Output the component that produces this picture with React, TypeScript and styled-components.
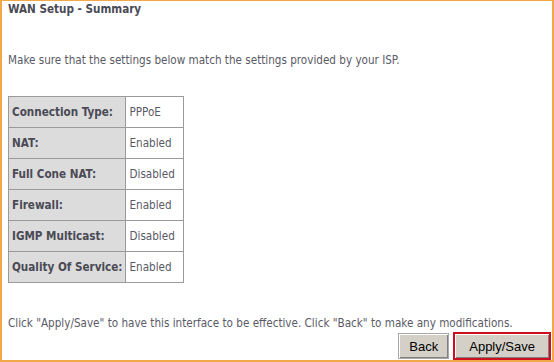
import React from "react";
import styled, { createGlobalStyle } from "styled-components";

const GlobalStyle = createGlobalStyle`
  html, body {
    margin: 0;
    padding: 0;
    background: #ffffff;
  }
  body {
    font-family: "DejaVu Sans Condensed", "Noto Sans", sans-serif;
  }
`;

const rows = [
  { label: "Connection Type:", value: "PPPoE" },
  { label: "NAT:", value: "Enabled" },
  { label: "Full Cone NAT:", value: "Disabled" },
  { label: "Firewall:", value: "Enabled" },
  { label: "IGMP Multicast:", value: "Disabled" },
  { label: "Quality Of Service:", value: "Enabled" },
];

export default function App() {
  return (
    <>
      <GlobalStyle />
      <Frame>
        <Title>WAN Setup - Summary</Title>
        <Intro>
          Make sure that the settings below match the settings provided by your ISP.
        </Intro>
        <SummaryTable>
          <tbody>
            {rows.map((row) => (
              <tr key={row.label}>
                <LabelCell>{row.label}</LabelCell>
                <ValueCell>{row.value}</ValueCell>
              </tr>
            ))}
          </tbody>
        </SummaryTable>
        <Note>
          Click "Apply/Save" to have this interface to be effective. Click "Back" to make any
          modifications.
        </Note>
        <Actions>
          <Button>Back</Button>
          <Button $primary>Apply/Save</Button>
        </Actions>
      </Frame>
    </>
  );
}

const Frame = styled.div`
  width: 554px;
  height: 362px;
  box-sizing: border-box;
  border-left: 2px solid #f0a848;
  border-top: 1px solid #f0a848;
  border-right: 2px solid #f0a848;
  border-bottom: 2px solid #f0a848;
  padding: 1px 1px 0 6px;
  display: flex;
  flex-direction: column;
  color: #555560;
`;

const Title = styled.div`
  font-weight: bold;
  font-size: 11.6px;
  color: #4a4a55;
  height: 16px;
  line-height: 14px;
`;

const Intro = styled.div`
  font-size: 11.6px;
  margin-top: 35px;
  line-height: 14px;
  color: #5a5a66;
`;

const SummaryTable = styled.table`
  margin-top: 29px;
  border-collapse: collapse;
  border: 1px solid #e6e6e6;
  font-size: 11.6px;
  width: 176px;
`;

const LabelCell = styled.td`
  background: #dcdcdc;
  font-weight: bold;
  color: #4a4a55;
  height: 30px;
  padding: 0 3px;
  border: 1px solid #9a9a9a;
  white-space: nowrap;
  width: 110px;
`;

const ValueCell = styled.td`
  background: #ffffff;
  color: #5a5a66;
  height: 30px;
  padding: 0 3px;
  border: 1px solid #9a9a9a;
  white-space: nowrap;
`;

const Note = styled.div`
  font-size: 11.6px;
  margin-top: 33px;
  line-height: 14px;
  color: #5a5a66;
  white-space: nowrap;
`;

const Actions = styled.div`
  display: flex;
  justify-content: flex-end;
  align-items: flex-end;
  gap: 4px;
  margin-top: auto;
`;

const Button = styled.button<{ $primary?: boolean }>`
  font-family: "Liberation Sans", Arial, sans-serif;
  font-size: 13px;
  color: #000;
  background: #d4d0c8;
  height: ${({ $primary }) => ($primary ? "28px" : "26px")};
  margin-bottom: ${({ $primary }) => ($primary ? "0" : "1px")};
  padding: 0 ${({ $primary }) => ($primary ? "14px" : "10px")};
  border: ${({ $primary }) => ($primary ? "2px solid #cc1020" : "1px solid #a8a8a8")};
  box-shadow: inset 1px 1px 0 #fff, inset -1px -1px 0 #808080;
  cursor: pointer;
`;
